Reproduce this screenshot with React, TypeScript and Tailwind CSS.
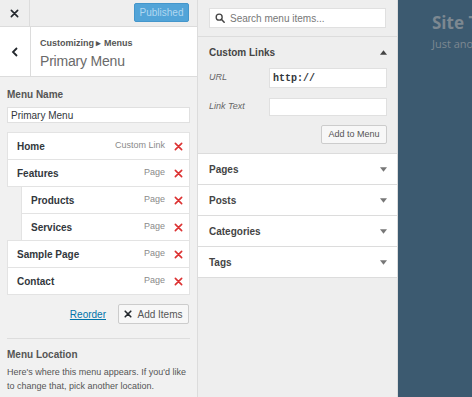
import React from "react";

const F = { fontFamily: '"Liberation Sans", Arial, sans-serif' };

function RedX() {
  return (
    <svg width="9" height="9" viewBox="0 0 10 10" className="shrink-0">
      <path d="M1.5 1.5 L8.5 8.5 M8.5 1.5 L1.5 8.5" stroke="#dc3232" strokeWidth="1.8" strokeLinecap="round" />
    </svg>
  );
}

function Item({ label, type, indent }: { label: string; type: string; indent?: boolean }) {
  return (
    <div className={`flex items-center h-[28px] bg-white border border-[#e3e3e3] -mt-px ${indent ? "ml-[14px]" : ""}`}>
      <span className="text-[10px] font-bold text-[#32373c] pl-[9px]">{label}</span>
      <span className="ml-auto text-[9px] text-[#8a8a8a] mr-[9px]">{type}</span>
      <span className="mr-[6px] flex"><RedX /></span>
    </div>
  );
}

function Down() {
  return (
    <svg width="7" height="5" viewBox="0 0 8 5"><path d="M0 0 L8 0 L4 5Z" fill="#777" /></svg>
  );
}

function Section({ label, h }: { label: string; h: string }) {
  return (
    <div className={`flex items-center bg-white border-b border-[#dcdcdc] ${h} pl-[11px] pr-[10px]`}>
      <span className="text-[10px] font-bold text-[#444]">{label}</span>
      <span className="ml-auto flex"><Down /></span>
    </div>
  );
}

export default function App() {
  return (
    <div className="flex w-[472px] h-[397px] overflow-hidden bg-[#eeeeee]" style={F}>
      {/* Left panel */}
      <div className="w-[198px] shrink-0 flex flex-col bg-[#f1f1f1] border-r border-[#dcdcdc]">
        <div className="flex h-[27px] border-b border-[#dcdcdc] bg-[#eeeeee]">
          <div className="w-[30px] flex items-center justify-center border-r border-[#dcdcdc]">
            <svg width="9" height="9" viewBox="0 0 10 10"><path d="M1.5 1.5 L8.5 8.5 M8.5 1.5 L1.5 8.5" stroke="#23282d" strokeWidth="1.8" strokeLinecap="round" /></svg>
          </div>
          <div className="flex-1 flex items-start justify-end pr-[8px] pt-[3px]">
            <div className="w-[55px] h-[19px] rounded-[2px] bg-[#52a4d8] border border-[#4496cb] flex items-center justify-center text-[10px] text-[#b0d7f0]">Published</div>
          </div>
        </div>
        <div className="flex h-[50px] bg-white border-b border-[#dcdcdc]">
          <div className="w-[31px] flex items-center justify-center border-r border-[#dcdcdc]">
            <svg width="8" height="10" viewBox="0 0 8 10"><path d="M6 1 L2 5 L6 9" stroke="#23282d" strokeWidth="1.8" fill="none" /></svg>
          </div>
          <div className="flex flex-col pl-[9px] pt-[10px]">
            <div className="text-[9px] font-bold text-[#555] leading-[12px]">Customizing ▸ Menus</div>
            <div className="text-[14px] text-[#6a6a6a] leading-[18px] mt-[3px] font-light tracking-[-0.2px]">Primary Menu</div>
          </div>
        </div>
        <div className="px-[7px] pt-[12px]">
          <div className="text-[10px] font-bold text-[#555] leading-[12px]">Menu Name</div>
          <div className="mt-[6px] h-[16px] bg-white border border-[#e0e0e0] text-[10px] text-[#32373c] flex items-center pl-[3px]">Primary Menu</div>
          <div className="mt-[10px]">
            <Item label="Home" type="Custom Link" />
            <Item label="Features" type="Page" />
            <Item label="Products" type="Page" indent />
            <Item label="Services" type="Page" indent />
            <Item label="Sample Page" type="Page" />
            <Item label="Contact" type="Page" />
          </div>
          <div className="flex items-center justify-end mt-[9px] gap-[12px]">
            <span className="text-[10px] text-[#0073aa] underline">Reorder</span>
            <div className="w-[71px] h-[20px] bg-[#f7f7f7] border border-[#ccc] rounded-[2px] flex items-center justify-center gap-[5px] text-[10px] text-[#555] mr-px">
              <svg width="8" height="8" viewBox="0 0 10 10"><path d="M1.5 1.5 L8.5 8.5 M8.5 1.5 L1.5 8.5" stroke="#23282d" strokeWidth="2" strokeLinecap="round" /></svg>
              Add Items
            </div>
          </div>
          <div className="mt-[14px] border-t border-[#dddddd]" />
          <div className="mt-[10px] text-[10px] font-bold text-[#555] leading-[12px]">Menu Location</div>
          <div className="mt-[4px] text-[9px] text-[#555] leading-[14px]">Here's where this menu appears. If you'd like to change that, pick another location.</div>
        </div>
      </div>

      {/* Middle panel */}
      <div className="w-[200px] shrink-0 flex flex-col bg-[#eeeeee] border-r border-[#dcdcdc]">
        <div className="h-[37px] border-b border-[#dcdcdc] px-[11px] pt-[8px]">
          <div className="h-[20px] bg-white border border-[#e0e0e0] flex items-center pl-[5px] gap-[5px]">
            <svg width="10" height="10" viewBox="0 0 12 12"><circle cx="5" cy="5" r="3.6" stroke="#444" strokeWidth="1.6" fill="none" /><path d="M7.6 7.6 L11 11" stroke="#444" strokeWidth="1.8" strokeLinecap="round" /></svg>
            <span className="text-[10px] text-[#777]">Search menu items...</span>
          </div>
        </div>
        <div className="border-b border-[#dcdcdc] pl-[11px] pr-[10px] h-[117px]">
          <div className="flex items-center h-[30px]">
            <span className="text-[10px] font-bold text-[#444]">Custom Links</span>
            <span className="ml-auto flex"><svg width="7" height="5" viewBox="0 0 8 5"><path d="M0 5 L8 5 L4 0Z" fill="#444" /></svg></span>
          </div>
          <div className="flex items-center h-[20px] mt-[1px]">
            <span className="w-[60px] text-[9px] italic text-[#666]">URL</span>
            <div className="flex-1 h-[20px] bg-white border border-[#e0e0e0] flex items-center pl-[3px] text-[10px] font-bold text-[#32373c]" style={{ fontFamily: '"Liberation Mono", monospace' }}>http://</div>
          </div>
          <div className="flex items-center h-[18px] mt-[10px]">
            <span className="w-[60px] text-[9px] italic text-[#666]">Link Text</span>
            <div className="flex-1 h-[18px] bg-white border border-[#e0e0e0]" />
          </div>
          <div className="flex justify-end mt-[9px]">
            <div className="w-[66px] h-[19px] bg-[#f7f7f7] border border-[#ccc] rounded-[2px] flex items-center justify-center text-[9px] text-[#555]">Add to Menu</div>
          </div>
        </div>
        <Section label="Pages" h="h-[31px]" />
        <Section label="Posts" h="h-[31px]" />
        <Section label="Categories" h="h-[31px]" />
        <Section label="Tags" h="h-[31px]" />
      </div>

      {/* Preview */}
      <div className="flex-1 bg-[#3c5a70] overflow-hidden pl-[34px] pt-[13px]" style={{ fontFamily: '"Open Sans", "Liberation Sans", sans-serif' }}>
        <div className="whitespace-nowrap text-[17px] font-bold text-[#7d8891] leading-[20px]">Site Title</div>
        <div className="whitespace-nowrap text-[11px] text-[#7d8891] mt-[3px]">Just another site</div>
      </div>
    </div>
  );
}
